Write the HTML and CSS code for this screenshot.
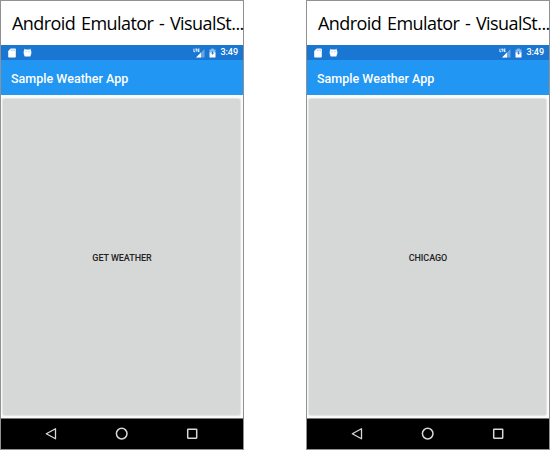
FILE: index.html
```html
<!DOCTYPE html>
<html lang="en">
<head>
<meta charset="utf-8">
<title>Sample Weather App</title>
<link rel="stylesheet" href="styles.css">
</head>
<body>
<svg width="0" height="0" class="defs" aria-hidden="true">
  <symbol id="sd" viewBox="0 0 8 10"><path fill="#fff" d="M2.700.5H7q.8 0 .8.8v7.400q0 .8-.8.8H1q-.8 0-.8-.8V3z"/><path stroke="#1976d2" stroke-opacity=".6" d="M3.300 1.500v1.400M4.900 1.500v1.400M6.400 1.500v1.400" stroke-width=".7"/></symbol>
  <symbol id="droid" viewBox="0 0 9 10"><path fill="#fff" d="M1.500.5l1 1h4l1-1 .2 1.800.6.700v3l-.6.800v1q0 .7-.7.700H2q-.7 0-.7-.7v-1L.7 6V3l.6-.7z"/><path fill="#1976d2" fill-opacity=".5" d="M2.500 3.200h1v1h-1zM5.500 3.200h1v1h-1z"/></symbol>
  <symbol id="signal" viewBox="0 0 12 10"><path fill="#fff" fill-opacity=".35" d="M11.500 1v8.500H3z"/><path fill="#fff" d="M8 4.500v5H3z"/><path fill="none" stroke="#fff" stroke-width=".9" d="M.9.700v3h1.300M2.300 1.100h2M3.300 1.100V3.700M6.500 1.100H5V3.600h1.500M5 2.300h1.300"/></symbol>
  <symbol id="battery" viewBox="0 0 7 10"><path fill="#fff" fill-opacity=".5" d="M2.200.5h2.600v.9h1.700V5H.5V1.400h1.700z"/><path fill="#fff" d="M.5 4.500h6v5h-6z"/><path fill="#1976d2" d="M4 2.800L2.200 5.600h1.100v1.700L4.900 4.900H4z"/></symbol>
  <symbol id="back" viewBox="0 0 12 14"><path fill="none" stroke="#d8d8d8" stroke-width="1.300" stroke-linejoin="round" d="M10.500 1.800v10L1.300 6.800z"/></symbol>
  <symbol id="home" viewBox="0 0 14 14"><circle cx="6.700" cy="6.600" r="5.300" fill="none" stroke="#d8d8d8" stroke-width="1.500"/></symbol>
  <symbol id="recent" viewBox="0 0 12 14"><rect x="1.700" y="2.200" width="9" height="9" rx=".4" fill="none" stroke="#d8d8d8" stroke-width="1.500"/></symbol>
</svg>
<main class="screens">
  <section class="emulator">
    <header class="window-title"><span>Android Emulator - VisualSt...</span></header>
    <div class="status">
      <svg class="sd"><use href="#sd"/></svg><svg class="droid"><use href="#droid"/></svg>
      <svg class="signal"><use href="#signal"/></svg><svg class="battery"><use href="#battery"/></svg><span class="clock">3:49</span>
    </div>
    <div class="app-bar">Sample Weather App</div>
    <div class="content"><button class="action">GET WEATHER</button></div>
    <nav class="nav"><svg class="back"><use href="#back"/></svg><svg class="home"><use href="#home"/></svg><svg class="recent"><use href="#recent"/></svg></nav>
  </section>
  <section class="emulator">
    <header class="window-title"><span>Android Emulator - VisualSt...</span></header>
    <div class="status">
      <svg class="sd"><use href="#sd"/></svg><svg class="droid"><use href="#droid"/></svg>
      <svg class="signal"><use href="#signal"/></svg><svg class="battery"><use href="#battery"/></svg><span class="clock">3:49</span>
    </div>
    <div class="app-bar">Sample Weather App</div>
    <div class="content"><button class="action">CHICAGO</button></div>
    <nav class="nav"><svg class="back"><use href="#back"/></svg><svg class="home"><use href="#home"/></svg><svg class="recent"><use href="#recent"/></svg></nav>
  </section>
</main>
</body>
</html>
```

FILE: styles.css
```css
* { box-sizing: border-box; }
body { margin: 0; background: #fff; font-family: Roboto, sans-serif; }
svg { display: block; flex: none; }
.defs { display: none; }
.screens { display: flex; justify-content: space-between; width: 550px; height: 450px; }
.emulator { display: flex; flex-direction: column; width: 244px; height: 450px; border: 1px solid #919191; }
.window-title {
  height: 44px; padding: 0 0 0 11px; line-height: 44px; white-space: nowrap;
  font-family: "Open Sans", "Noto Sans", sans-serif; font-size: 18px; letter-spacing: -.55px; word-spacing: 1.5px; color: #000;
}
.status { display: flex; align-items: center; height: 15px; padding: 0 5px 0 7px; background: #1976d2; }
.sd { width: 8px; height: 10px; }
.droid { width: 9px; height: 10px; margin-left: 7px; }
.signal { width: 12px; height: 10px; margin-left: auto; }
.battery { width: 7px; height: 10px; margin-left: 4px; }
.clock { margin-left: 4px; font-size: 9px; font-weight: 500; line-height: 15px; letter-spacing: -.05px; color: #fff; }
.app-bar { height: 35px; padding-left: 10px; line-height: 37px; font-size: 12.5px; font-weight: 500; letter-spacing: .02px; color: #fff; background: #2196f3; }
.content { display: flex; height: 323px; padding: 4px 3px 3px 2px; background: #fafafa; }
.action {
  flex: 1; margin: 0; padding: 1px 0 0 1px; border: 0; border-radius: 2px; background: #d6d8d7;
  box-shadow: 0 0 1px 1px #e2e3e3; font: 500 9px Roboto, sans-serif; letter-spacing: -.05px; color: #222;
}
.nav { display: flex; align-items: center; height: 31px; padding-left: 44px; border-top: 1px solid #777; background: #000; }
.back, .recent { width: 12px; height: 14px; }
.home { width: 14px; height: 14px; margin-left: 58px; }
.recent { margin-left: 57px; }
```
